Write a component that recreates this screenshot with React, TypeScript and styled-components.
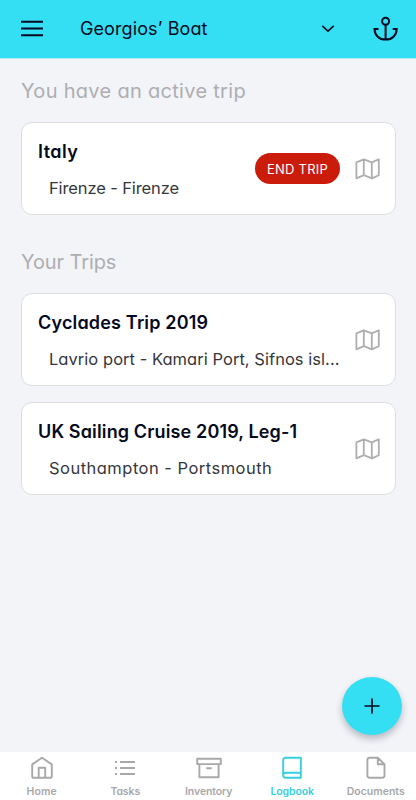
import React from "react";
import styled, { createGlobalStyle } from "styled-components";

const Global = createGlobalStyle`
  * { box-sizing: border-box; }
  body {
    margin: 0;
    background: #f3f4f8;
    font-family: Inter, "Open Sans", sans-serif;
    font-feature-settings: "cv11";
  }
  button { font: inherit; font-feature-settings: inherit; border: 0; padding: 0; background: none; color: inherit; }
`;

const Screen = styled.div`
  position: relative;
  display: flex;
  flex-direction: column;
  width: 416px;
  height: 800px;
  overflow: hidden;
  background: #f3f4f8;
`;

const Header = styled.header`
  display: flex;
  align-items: center;
  flex: none;
  height: 59px;
  padding: 0 17px 1px 20px;
  border-bottom: 1px solid #b4edf6;
  background: #34dff3;
  color: #060a20;
`;

const IconButton = styled.button`
  display: flex;
  flex: none;
`;

const BoatPicker = styled.button`
  display: flex;
  flex: 1;
  align-items: center;
  justify-content: space-between;
  margin: 0 38px 0 36px;
`;

const BoatName = styled.span`
  font-size: 18px;
  line-height: 24px;
  letter-spacing: 0.1px;
`;

const Content = styled.main`
  display: flex;
  flex: 1;
  flex-direction: column;
  padding: 17px 20px 0 21px;
`;

const SectionTitle = styled.h2<{ $spacing: number }>`
  margin: 0;
  height: 46px;
  font-size: 20px;
  font-weight: 400;
  line-height: 31px;
  letter-spacing: ${(p) => p.$spacing}px;
  color: #adaeb1;
`;

const Section = styled.section`
  margin-bottom: 32px;
`;

const TripList = styled.div`
  display: flex;
  flex-direction: column;
  gap: 16px;
`;

const TripCard = styled.article`
  display: flex;
  align-items: center;
  height: 93px;
  padding: 0 15px 0 16px;
  border: 1px solid #dcdee1;
  border-radius: 11px;
  background: #fff;
`;

const TripText = styled.div`
  flex: 1;
  min-width: 0;
  padding-top: 3px;
`;

const TripName = styled.h3<{ $spacing: number }>`
  margin: 0;
  font-size: 18px;
  font-weight: 600;
  line-height: 24px;
  letter-spacing: ${(p) => p.$spacing}px;
  color: #060a20;
`;

const TripRoute = styled.p<{ $spacing: number }>`
  margin: 12px 0 0 11px;
  font-size: 16.5px;
  line-height: 24px;
  letter-spacing: ${(p) => p.$spacing}px;
  white-space: nowrap;
  color: #36373b;
`;

const EndTrip = styled.button`
  flex: none;
  width: 85px;
  height: 31px;
  margin-right: 14px;
  border-radius: 16px;
  background: #cb1c0b;
  color: #fff;
  font-size: 13px;
  letter-spacing: 0.25px;
`;

const AddButton = styled.button`
  position: absolute;
  left: 342px;
  top: 677px;
  display: flex;
  align-items: center;
  justify-content: center;
  width: 60px;
  height: 58px;
  border-radius: 50%;
  background: #34dff3;
  box-shadow: 0 4px 7px rgba(30, 35, 55, 0.28);
`;

const TabBar = styled.nav`
  display: grid;
  grid-template-columns: repeat(5, 83.5px);
  flex: none;
  height: 48px;
  background: #fff;
`;

const Tab = styled.a<{ $active?: boolean; $spacing: number }>`
  display: flex;
  flex-direction: column;
  align-items: center;
  padding-top: 4px;
  font-size: 10.5px;
  font-weight: 600;
  line-height: 16px;
  letter-spacing: ${(p) => p.$spacing}px;
  color: ${(p) => (p.$active ? "#35cfdf" : "#a8a8aa")};

  svg { margin-bottom: 4px; }
`;

const MenuIcon = () => (
  <svg width="24" height="24" viewBox="0 0 24 24" stroke="currentColor" strokeWidth="2">
    <path d="M1 4.8H23M1 11.6H23M1 18.2H23" />
  </svg>
);

const ChevronIcon = () => (
  <svg width="14" height="10" viewBox="0 0 14 10" fill="none" stroke="currentColor" strokeWidth="1.6">
    <path d="M1.3 1.9 7 7.2l5.7-5.3" />
  </svg>
);

const AnchorIcon = () => (
  <svg width="26" height="26" viewBox="0 0 26 26" fill="none" stroke="currentColor" strokeWidth="2">
    <circle cx="12.6" cy="5.2" r="3.5" />
    <path d="M12.6 8.7V23.6M5.5 12.9H1.5C1.7 19.4 6.2 23.6 12.6 23.6s10.9-4.2 11.1-10.7h-4" />
  </svg>
);

const MapIcon = () => (
  <svg width="26" height="24" viewBox="0 0 26 24" fill="none" stroke="#aeaeae" strokeWidth="1.8" strokeLinejoin="round">
    <path d="M2.4 5.4 9.8 2.3l8 3.1 7-3.1v15.9l-7 3.2-8-3.2-7.4 3.2ZM9.8 2.3v15.9M17.8 5.4v16" />
  </svg>
);

const PlusIcon = () => (
  <svg width="16" height="16" viewBox="0 0 16 16" stroke="#060a20" strokeWidth="1.7">
    <path d="M8 .5v15M.5 8h15" />
  </svg>
);

const TabIcon = ({ children }: { children: React.ReactNode }) => (
  <svg width="26" height="24" viewBox="0 0 26 24" fill="none" stroke="currentColor" strokeWidth="1.9" strokeLinejoin="round">
    {children}
  </svg>
);

const tabs = [
  { label: "Home", spacing: 0.1, icon: <path d="M3.2 8.4 13 1.8 22.8 8.4v11.8q0 1.6-1.6 1.6H4.8q-1.6 0-1.6-1.6ZM9.7 21.8V11.7h6.5v10.1" /> },
  { label: "Tasks", spacing: -0.1, icon: <path d="M3 6h2M8 6h15M3 12h2M8 12h15M3 18h2M8 18h15" /> },
  { label: "Inventory", spacing: -0.1, icon: <path d="M1.2 2.7h23.6v5.4H1.2ZM3.4 8.1v13.2h19.2V8.1M10.3 12.2h5.4" /> },
  { label: "Logbook", spacing: -0.1, active: true, icon: <path d="M6.5 1.8h15.3v20H6.5q-2.3 0-2.3-2.5V4.2q0-2.4 2.3-2.4ZM4.2 19.2q0-2.5 2.3-2.5h15.3" /> },
  { label: "Documents", spacing: 0, icon: <path d="M14.8 1.8H6.6Q4.4 1.8 4.4 4v15.6q0 2.2 2.2 2.2h12.7q2.2 0 2.2-2.2V8.3ZM14.8 1.8v6.5h6.7" /> },
];

interface TripProps {
  name: string;
  route: string;
  nameSpacing?: number;
  routeSpacing?: number;
  active?: boolean;
}

const Trip = ({ name, route, nameSpacing = 0, routeSpacing = 0, active }: TripProps) => (
  <TripCard>
    <TripText>
      <TripName $spacing={nameSpacing}>{name}</TripName>
      <TripRoute $spacing={routeSpacing}>{route}</TripRoute>
    </TripText>
    {active && <EndTrip>END TRIP</EndTrip>}
    <IconButton aria-label="Show map"><MapIcon /></IconButton>
  </TripCard>
);

export default function App() {
  return (
    <>
      <Global />
      <Screen>
        <Header>
          <IconButton aria-label="Menu"><MenuIcon /></IconButton>
          <BoatPicker>
            <BoatName>Georgios’ Boat</BoatName>
            <ChevronIcon />
          </BoatPicker>
          <IconButton aria-label="Anchor"><AnchorIcon /></IconButton>
        </Header>
        <Content>
          <Section>
            <SectionTitle $spacing={0.3}>You have an active trip</SectionTitle>
            <Trip name="Italy" nameSpacing={0.45} route="Firenze - Firenze" routeSpacing={-0.12} active />
          </Section>
          <Section>
            <SectionTitle $spacing={-0.1}>Your Trips</SectionTitle>
            <TripList>
              <Trip
                name="Cyclades Trip 2019"
                nameSpacing={0.17}
                route="Lavrio port - Kamari Port, Sifnos isl..."
                routeSpacing={0.04}
              />
              <Trip
                name="UK Sailing Cruise 2019, Leg-1"
                nameSpacing={0.14}
                route="Southampton - Portsmouth"
                routeSpacing={0.48}
              />
            </TripList>
          </Section>
        </Content>
        <TabBar>
          {tabs.map((tab) => (
            <Tab key={tab.label} $active={tab.active} $spacing={tab.spacing}>
              <TabIcon>{tab.icon}</TabIcon>
              {tab.label}
            </Tab>
          ))}
        </TabBar>
        <AddButton aria-label="Add trip"><PlusIcon /></AddButton>
      </Screen>
    </>
  );
}
